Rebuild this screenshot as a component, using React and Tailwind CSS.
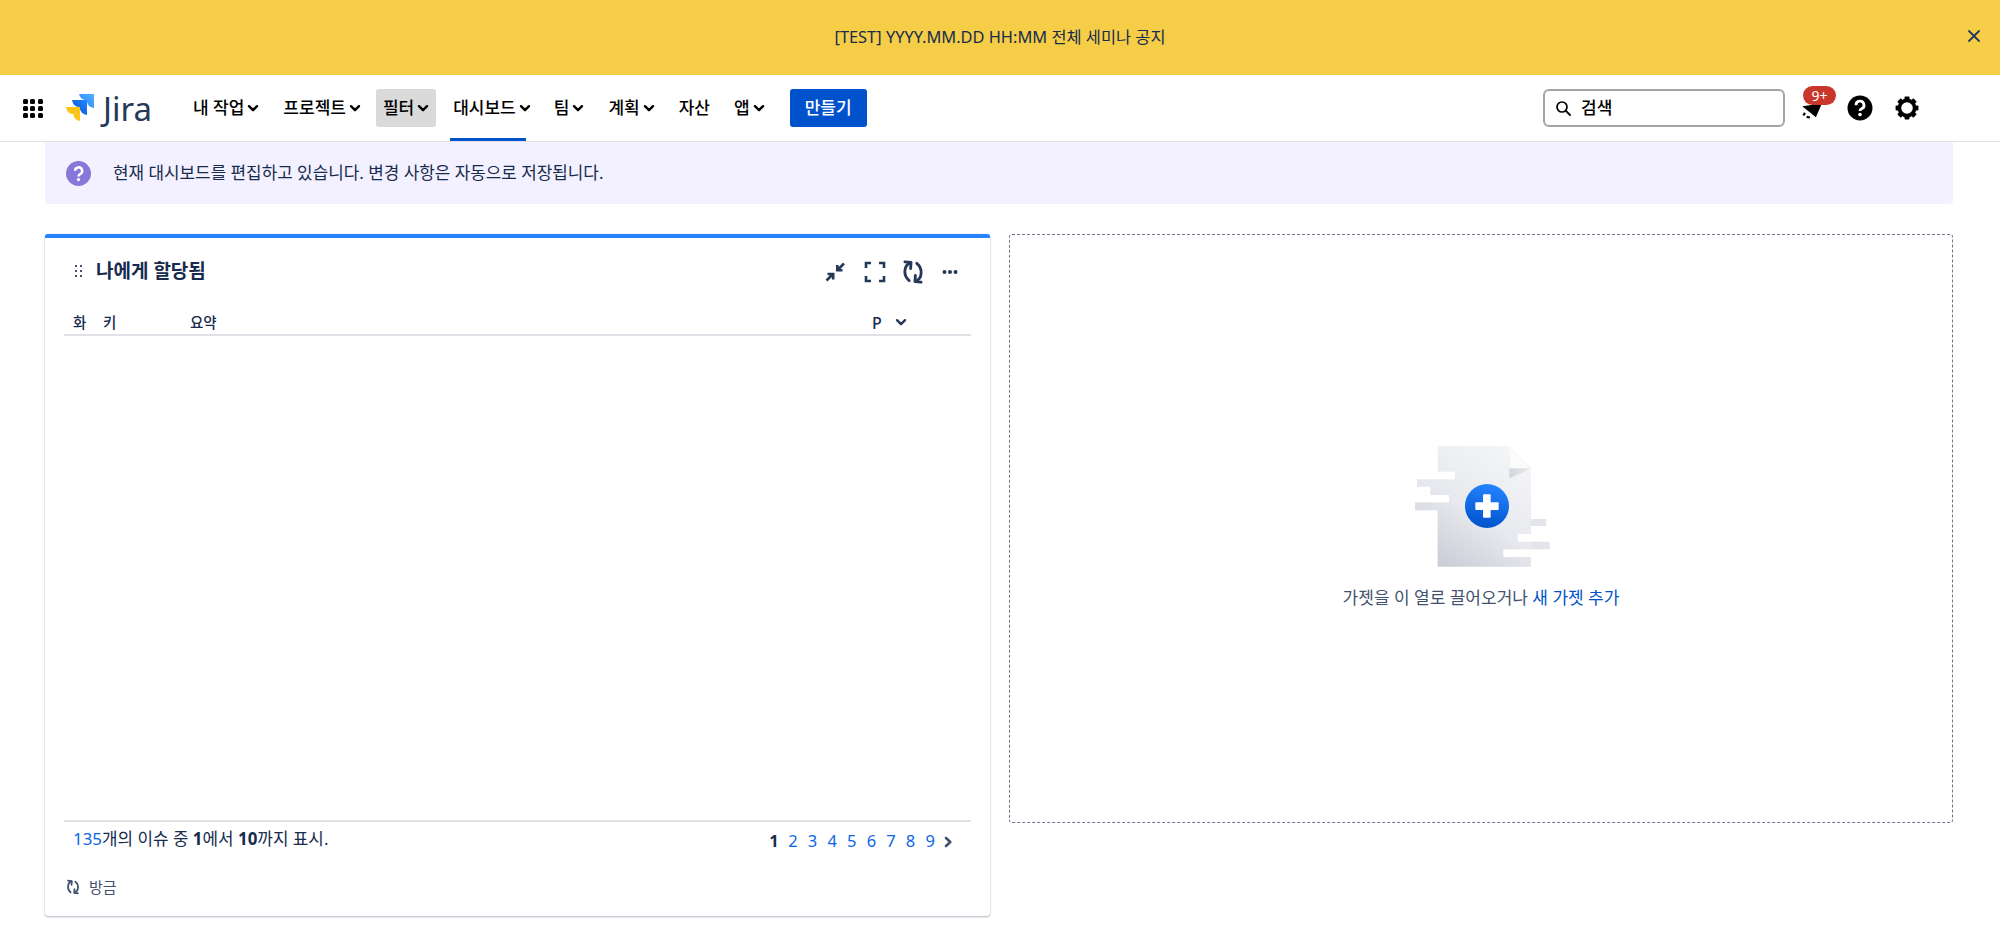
import React from "react";

const font = { fontFamily: '"Noto Sans","Noto Sans CJK KR",sans-serif' };

function Chev({ className = "", color = "#000" }) {
  return (
    <svg width="12" height="9" viewBox="0 0 12 9" className={className} fill="none">
      <path d="M2 2.2 L6 6.2 L10 2.2" stroke={color} strokeWidth="2.4" strokeLinecap="round" strokeLinejoin="round" />
    </svg>
  );
}

function Refresh({ size = 24, color = "#253858", sw = 2.6 }) {
  return (
    <svg width={size} height={size} viewBox="0 0 24 24" fill="none">
      <path d="M9.5 3.6 C3.5 6 2.5 15 8.5 20" stroke={color} strokeWidth={sw} strokeLinecap="round" />
      <path d="M4.5 2.6 L10.2 3.2 L9.8 8.8" stroke={color} strokeWidth={sw} strokeLinecap="round" strokeLinejoin="round" />
      <path d="M14.5 20.4 C20.5 18 21.5 9 15.5 4" stroke={color} strokeWidth={sw} strokeLinecap="round" />
      <path d="M19.5 21.4 L13.8 20.8 L14.2 15.2" stroke={color} strokeWidth={sw} strokeLinecap="round" strokeLinejoin="round" />
    </svg>
  );
}

function JiraMark() {
  return (
    <svg width="30" height="30" viewBox="0 0 30 30">
      <defs>
        <linearGradient id="jb" x1="0" y1="1" x2="1" y2="0">
          <stop offset="0" stopColor="#0052cc" />
          <stop offset="1" stopColor="#2684ff" />
        </linearGradient>
        <linearGradient id="jl" x1="0" y1="1" x2="1" y2="0">
          <stop offset="0" stopColor="#2684ff" />
          <stop offset="1" stopColor="#4fb0ff" />
        </linearGradient>
      </defs>
      <path d="M13 1 H28 V15 Q22 14 21 9 V7 H20 Q14 6.5 13 1 Z" fill="url(#jl)" />
      <path d="M6 7 H21 V22 Q15 21 14 16 V14 H13 Q7 13.5 6 7 Z" fill="url(#jb)" />
      <path d="M0 14 H14 V28 Q8 27 7.5 22 V21 H6 Q1 20 0 14 Z" fill="#fcc419" />
    </svg>
  );
}

function Illustration() {
  return (
    <svg width="200" height="150" viewBox="0 0 600 450">
      <defs>
        <linearGradient id="doc" x1="0.75" y1="0" x2="0.1" y2="1">
          <stop offset="0" stopColor="#f4f5f7" />
          <stop offset="0.5" stopColor="#e8e9ee" />
          <stop offset="1" stopColor="#c5c9d3" />
        </linearGradient>
        <linearGradient id="fold" x1="1" y1="0" x2="0" y2="1">
          <stop offset="0" stopColor="#f4f5f7" />
          <stop offset="1" stopColor="#cfd2da" />
        </linearGradient>
        <linearGradient id="plus" x1="0.6" y1="0" x2="0.4" y2="1">
          <stop offset="0" stopColor="#2684ff" />
          <stop offset="1" stopColor="#0052cc" />
        </linearGradient>
      </defs>
      <path d="M170 48 H385 L450 115 V410 H170 V241 H102 V217 H148 V170 H108 V148 H170 Z" fill="url(#doc)" />
      <rect x="170" y="125" width="52" height="23" fill="#fff" />
      <rect x="148" y="195" width="56" height="22" fill="#fff" />
      <path d="M385 48 L450 115 L385 145 Z" fill="url(#fold)" />
      <path d="M385 48 L450 115 H385 Z" fill="#fbfbfc" />
      <rect x="450" y="267" width="46" height="21" fill="#e3e5ea" />
      <rect x="411" y="312" width="60" height="23" fill="#fff" />
      <rect x="450" y="335" width="56" height="23" fill="#e3e5ea" />
      <rect x="367" y="358" width="83" height="23" fill="#fff" />
      <circle cx="318" cy="228" r="66" fill="url(#plus)" />
      <rect x="283" y="217" width="70" height="23" rx="3" fill="#fff" />
      <rect x="306" y="193" width="23" height="70" rx="3" fill="#fff" />
    </svg>
  );
}

function NavItem({ label, chev = true, active = false, pressed = false, className = "" }) {
  return (
    <div
      className={`relative flex h-[38px] items-center gap-[3px] rounded-[3px] px-[7px] text-[17px] font-medium whitespace-nowrap text-black ${pressed ? "bg-[#dadada]" : ""} ${className}`}
    >
      <span>{label}</span>
      {chev && <Chev />}
      {active && <div className="absolute right-[12px] bottom-[-14px] left-[4px] h-[3px] bg-[#0052cc]" />}
    </div>
  );
}

export default function App() {
  return (
    <div className="h-[931px] w-[2000px] overflow-hidden bg-white" style={font}>
      <div className="relative flex h-[75px] items-center justify-center bg-[#f5cd47] text-[16.4px] text-[#172b4d]">
        <span>[TEST] YYYY.MM.DD HH:MM 전체 세미나 공지</span>
        <svg className="absolute top-[28px] right-[18px]" width="16" height="16" viewBox="0 0 16 16" fill="none">
          <path d="M3 3 L13 13 M13 3 L3 13" stroke="#253858" strokeWidth="1.8" strokeLinecap="round" />
        </svg>
      </div>

      <div className="flex h-[67px] items-center border-b border-[#dfe1e6] pl-[23px]">
        <div className="grid w-[20px] grid-cols-3 gap-[2px]">
          {[0, 1, 2, 3, 4, 5, 6, 7, 8].map((i) => (
            <div key={i} className="h-[5px] w-[5px] rounded-[1.5px] bg-black" />
          ))}
        </div>
        <div className="ml-[23px] flex items-center gap-[7px]">
          <JiraMark />
          <span className="text-[33px] leading-none font-normal text-[#253858]">Jira</span>
        </div>
        <div className="ml-[34px] flex items-center">
          <NavItem label="내 작업" />
          <NavItem label="프로젝트" className="ml-[10px]" />
          <NavItem label="필터" pressed className="ml-[8px]" />
          <NavItem label="대시보드" active className="ml-[10px]" />
          <NavItem label="팀" className="ml-[9px]" />
          <NavItem label="계획" className="ml-[10px]" />
          <NavItem label="자산" chev={false} className="ml-[10px]" />
          <NavItem label="앱" className="ml-[10px]" />
        </div>
        <button className="ml-[18px] h-[38px] w-[77px] rounded-[3px] bg-[#0052cc] text-[17px] font-medium text-white">
          만들기
        </button>
        <div className="ml-auto flex h-[38px] w-[242px] items-center gap-[10px] rounded-[6px] border-2 border-[#a5a5a5] pl-[10px] text-[17px] font-medium text-black">
          <svg width="16" height="16" viewBox="0 0 16 16" fill="none">
            <circle cx="7" cy="7" r="5" stroke="#000" strokeWidth="1.7" />
            <path d="M11 11 L15 15" stroke="#000" strokeWidth="1.8" strokeLinecap="round" />
          </svg>
          <span>검색</span>
        </div>
        <div className="relative ml-[12px] flex h-[38px] w-[28px] items-center justify-center">
          <svg className="mt-[2px]" width="24" height="24" viewBox="0 0 22 22">
            <path d="M3 8.5 L21 6 L15.5 18.5 Z" fill="#000" />
            <path d="M5.5 14.5 L4 17 M7 18.2 L10 18.8" stroke="#000" strokeWidth="2" />
          </svg>
          <div className="absolute top-[-3px] left-[6px] flex h-[19px] w-[33px] items-center justify-center rounded-full bg-[#c9372c] text-[14px] text-white">
            9+
          </div>
        </div>
        <svg className="ml-[22px]" width="26" height="26" viewBox="0 0 26 26">
          <circle cx="13" cy="13" r="12.5" fill="#000" />
          <path d="M9 10.2 A4 4 0 1 1 14.6 13.8 C13.4 14.5 13 15 13 16" fill="none" stroke="#fff" strokeWidth="2.8" />
          <circle cx="13" cy="19.6" r="1.8" fill="#fff" />
        </svg>
        <svg className="ml-[22px]" width="24" height="24" viewBox="0 0 24 24" fill="none">
          <circle cx="12" cy="12" r="7.6" stroke="#000" strokeWidth="3.6" />
          {[0, 45, 90, 135, 180, 225, 270, 315].map((a) => (
            <rect key={a} x="9.5" y="0.6" width="5" height="4" rx="0.8" fill="#000" transform={`rotate(${a} 12 12)`} />
          ))}
        </svg>
        <div className="w-[81px]" />
      </div>

      <div className="mr-[47px] ml-[45px] flex h-[62px] items-center gap-[22px] rounded-b-[4px] bg-[#f3f0ff] pl-[21px] text-[16.9px] text-[#172b4d]">
        <svg width="25" height="25" viewBox="0 0 26 26">
          <circle cx="13" cy="13" r="13" fill="#8777d9" />
          <path d="M9.4 10.2 A3.7 3.7 0 1 1 14.4 13.8 C13.4 14.4 13 15 13 16" fill="none" stroke="#fff" strokeWidth="2.6" />
          <circle cx="13" cy="19.3" r="1.7" fill="#fff" />
        </svg>
        <span>현재 대시보드를 편집하고 있습니다. 변경 사항은 자동으로 저장됩니다.</span>
      </div>

      <div className="mx-[45px] mt-[30px] flex items-start gap-[19px]">
        <div className="flex h-[682px] w-[945px] flex-col rounded-[3px] border-t-[4px] border-[#2684ff] bg-white px-[19px] pb-[18px] shadow-[0_1px_2px_rgba(9,30,66,0.3),0_0_1px_rgba(9,30,66,0.25)]">
          <div className="mt-[18px] flex h-[30px] items-center">
            <div className="ml-[11px] grid grid-cols-2 gap-x-[3px] gap-y-[3px]">
              {[0, 1, 2, 3, 4, 5].map((i) => (
                <div key={i} className="h-[2px] w-[2px] bg-[#42526e]" />
              ))}
            </div>
            <div className="ml-[14px] text-[19px] font-semibold text-[#172b4d]">나에게 할당됨</div>
            <div className="mt-[2px] mr-[13px] ml-auto flex items-center">
              <svg width="24" height="24" viewBox="0 0 24 24" fill="none">
                <path d="M21 3.5 L14.5 10 M14.3 5 V10.2 H19.5" stroke="#253858" strokeWidth="2.6" />
                <path d="M3.5 20.5 L10 14 M4.5 14 H10.2 V19.5" stroke="#253858" strokeWidth="2.6" />
              </svg>
              <svg className="ml-[17px]" width="22" height="22" viewBox="0 0 22 22" fill="none">
                <path d="M2 7 V2 H7 M15 2 H20 V7 M20 15 V20 H15 M7 20 H2 V15" stroke="#253858" strokeWidth="2.6" />
              </svg>
              <div className="ml-[14px]">
                <Refresh size={26} sw={2.6} />
              </div>
              <svg className="ml-[16px]" width="16" height="6" viewBox="0 0 16 6">
                <circle cx="2.5" cy="3" r="2" fill="#253858" />
                <circle cx="8" cy="3" r="2" fill="#253858" />
                <circle cx="13.5" cy="3" r="2" fill="#253858" />
              </svg>
            </div>
          </div>

          <div className="mt-[25px] flex h-[25px] items-center border-b-2 border-[#dfe1e6] pl-[9px] text-[14.5px] font-medium text-[#172b4d]">
            <div className="w-[30px]">화</div>
            <div className="w-[87px]">키</div>
            <div className="w-[682px]">요약</div>
            <div className="w-[23px] text-[16px]">P</div>
            <Chev color="#253858" />
          </div>

          <div className="flex-1 border-b-2 border-[#dfe1e6]" />

          <div className="flex h-[37px] items-center justify-between pr-[18px] pl-[9px] text-[16.9px] text-[#172b4d]">
            <div className="mt-[-2px]">
              <span className="text-[#0c66e4]">135</span>개의 이슈 중 <b>1</b>에서 <b>10</b>까지 표시.
            </div>
            <div className="mt-[3px] flex items-center gap-[10px] text-[16.5px] text-[#0c66e4]">
              <b className="w-[9px] text-[#172b4d]">1</b>
              {["2", "3", "4", "5", "6", "7", "8", "9"].map((n) => (
                <span key={n} className="w-[9.6px]">
                  {n}
                </span>
              ))}
              <svg className="ml-[-2px]" width="10" height="12" viewBox="0 0 10 12" fill="none">
                <path d="M3 2 L7.3 6 L3 10" stroke="#42526e" strokeWidth="2.6" strokeLinecap="round" strokeLinejoin="round" />
              </svg>
            </div>
          </div>

          <div className="mt-[17px] flex items-center gap-[8px] pl-[1px] text-[15px] text-[#42526e]">
            <Refresh size={16} color="#42526e" sw={2.6} />
            <span>방금</span>
          </div>
        </div>

        <div className="flex h-[589px] w-[944px] flex-col items-center justify-center rounded-[3px] border border-dashed border-[#6b778c] pb-[16px]">
          <Illustration />
          <div className="mt-[5px] text-[17px] text-[#42526e]">
            가젯을 이 열로 끌어오거나 <span className="text-[#0052cc]">새 가젯 추가</span>
          </div>
        </div>
      </div>
    </div>
  );
}
